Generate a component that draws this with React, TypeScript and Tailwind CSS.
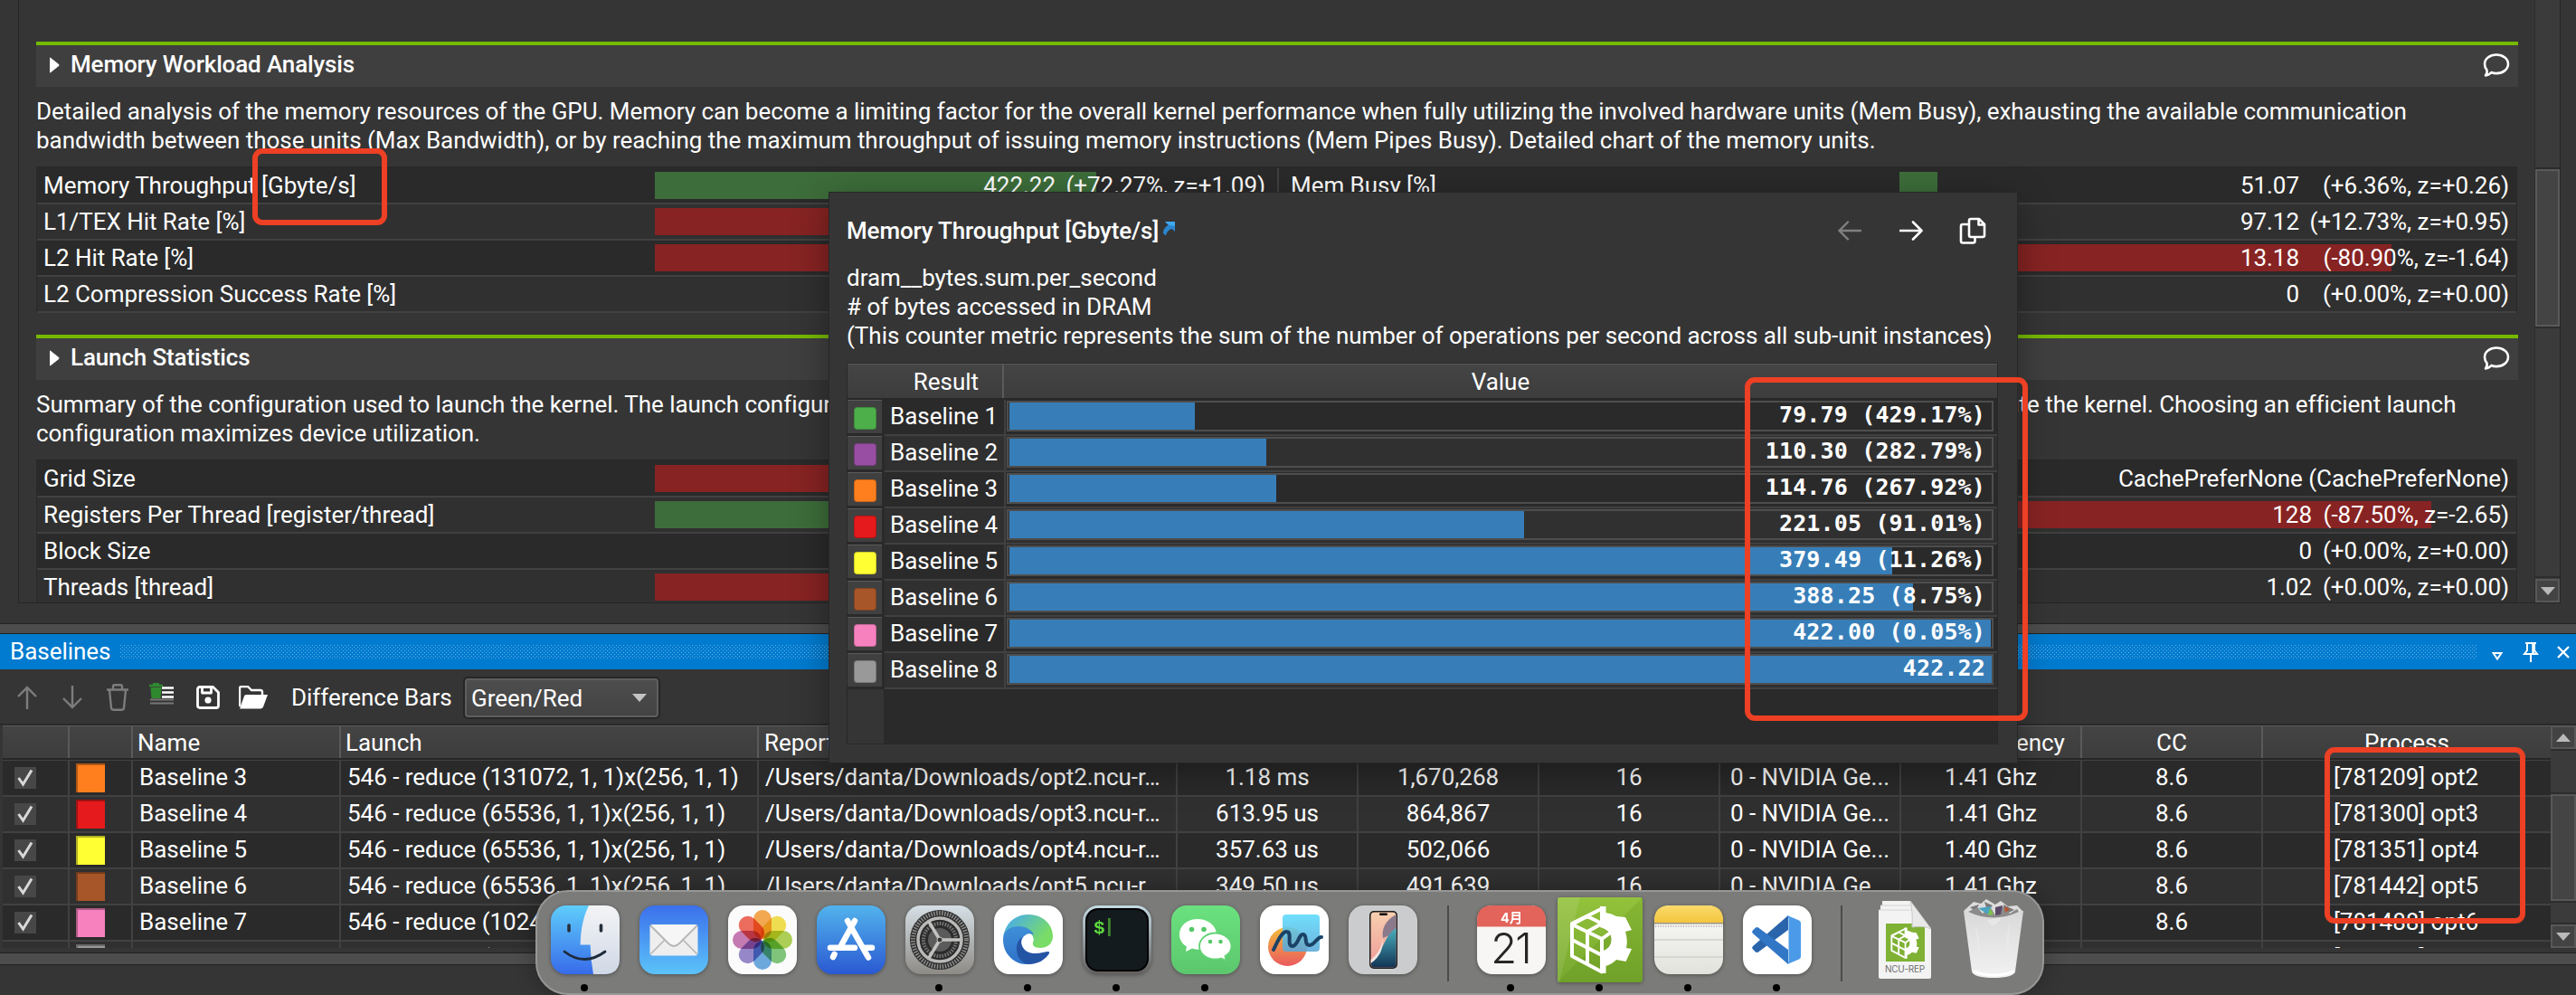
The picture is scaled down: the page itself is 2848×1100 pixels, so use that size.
import React from "react";

type Cell = {
  label: string;
  bar?: number;
  tone?: "g" | "r";
  value?: string;
  pct?: string;
  valueW?: string;
};

const Bubble = () => (
  <svg width="30" height="28" viewBox="0 0 30 28" fill="none" stroke="#fff" strokeWidth="2.6" strokeLinejoin="round">
    <path d="M3 25.500C4.500 23.500 5 21.500 4.400 19.300C2.800 17.400 2 15.200 2 12.800C2 7 7.700 2.500 15 2.500S28 7 28 12.800S22.300 23.100 15 23.100C13 23.100 11 22.700 9.400 22C7.600 24.200 5.500 25.300 3 25.500Z" />
  </svg>
);

const SectionHeader = ({ title }: { title: string }) => (
  <div className="flex h-[50px] items-center border-t-4 border-[#76b900] bg-[#3f3f3f] pb-1 pl-[14px] pr-[9px]">
    <svg width="12" height="18" viewBox="0 0 12 18" className="mt-[2px]">
      <path d="M1 1.500Q1 0 2.200 1L11 8Q12 9 11 10L2.200 17Q1 18 1 16.500Z" fill="#fff" />
    </svg>
    <span className="ml-[12px] text-[26px] font-medium tracking-[-0.14px]">{title}</span>
    <span className="ml-auto mt-[2px]">
      <Bubble />
    </span>
  </div>
);

const MetricCell = ({ c, side }: { c: Cell; side: "l" | "r" }) => (
  <div
    className={
      side === "l"
        ? "relative flex h-full w-[1373px] items-center border-r-2 border-[#414141] pl-[7px] pr-[13px]"
        : "relative flex h-full flex-1 items-center pl-[13px] pr-[10px]"
    }
  >
    <span className={side === "l" ? "w-[676px] shrink-0" : "w-[673px] shrink-0"}>{c.label}</span>
    <div className="flex h-[30px] flex-1 items-center">
      {c.bar ? (
        <div className={c.tone === "g" ? "h-[30px] bg-[#3d6d3a]" : "h-[30px] bg-[#872323]"} style={{ width: c.bar }} />
      ) : null}
    </div>
    <div className={side === "l" ? "absolute right-[13px] flex" : "absolute right-[8px] flex"}>
      <span>{c.value}</span>
      {c.pct ? <span className={c.valueW === "wide" ? "w-[232px] text-right" : "w-[218px] text-right"}>{c.pct}</span> : null}
    </div>
  </div>
);

const MetricTable = ({ rows }: { rows: [Cell, Cell][] }) => (
  <div className="mt-[13px] w-[2743px] border-x border-t-2 border-[#292929]">
    {rows.map(([a, b], i) => (
      <div
        key={i}
        className={
          i % 2 === 0
            ? "flex h-10 border-b-2 border-[#414141] bg-[#2a2a2a]"
            : "flex h-10 border-b-2 border-[#414141] bg-[#303030]"
        }
      >
        <MetricCell c={a} side="l" />
        <MetricCell c={b} side="r" />
      </div>
    ))}
  </div>
);

const memoryRows: [Cell, Cell][] = [
  [
    { label: "Memory Throughput [Gbyte/s]", bar: 488, tone: "g", value: "422.22", pct: "(+72.27%, z=+1.09)", valueW: "wide" },
    { label: "Mem Busy [%]", bar: 42, tone: "g", value: "51.07", pct: "(+6.36%, z=+0.26)", valueW: "wide" },
  ],
  [
    { label: "L1/TEX Hit Rate [%]", bar: 400, tone: "r" },
    { label: "", value: "97.12", pct: "(+12.73%, z=+0.95)", valueW: "wide" },
  ],
  [
    { label: "L2 Hit Rate [%]", bar: 400, tone: "r" },
    { label: "", bar: 544, tone: "r", value: "13.18", pct: "(-80.90%, z=-1.64)", valueW: "wide" },
  ],
  [{ label: "L2 Compression Success Rate [%]" }, { label: "", value: "0", pct: "(+0.00%, z=+0.00)", valueW: "wide" }],
];

const launchRows: [Cell, Cell][] = [
  [{ label: "Grid Size", bar: 400, tone: "r" }, { label: "", value: "CachePreferNone (CachePreferNone)" }],
  [
    { label: "Registers Per Thread [register/thread]", bar: 400, tone: "g" },
    { label: "", bar: 588, tone: "r", value: "128", pct: "(-87.50%, z=-2.65)" },
  ],
  [{ label: "Block Size" }, { label: "", value: "0", pct: "(+0.00%, z=+0.00)" }],
  [{ label: "Threads [thread]", bar: 400, tone: "r" }, { label: "", value: "1.02", pct: "(+0.00%, z=+0.00)" }],
];

const ScrollButton = ({ up }: { up?: boolean }) => (
  <div className="flex h-[26px] w-full items-center justify-center border-2 border-[#585858] bg-[#434343]">
    <svg width="16" height="9" viewBox="0 0 16 9">
      <path d={up ? "M0 9L8 0L16 9Z" : "M0 0L8 9L16 0Z"} fill="#b9b9b9" />
    </svg>
  </div>
);

const baselines = [
  { n: 1, color: "#4daf4a", w: 205, t: "79.79 (429.17%)" },
  { n: 2, color: "#984ea3", w: 284, t: "110.30 (282.79%)" },
  { n: 3, color: "#ff7f1e", w: 295, t: "114.76 (267.92%)" },
  { n: 4, color: "#e41a1c", w: 569, t: "221.05 (91.01%)" },
  { n: 5, color: "#ffff33", w: 976, t: "379.49 (11.26%)" },
  { n: 6, color: "#a65628", w: 999, t: "388.25 (8.75%)" },
  { n: 7, color: "#f781bf", w: 1085, t: "422.00 (0.05%)" },
  { n: 8, color: "#999999", w: 1086, t: "422.22" },
];

const Popup = () => (
  <div className="absolute left-[916px] top-[212px] flex h-[632px] w-[1315px] flex-col border border-[#272727] bg-[#353535] pl-[19px] pr-[22px] shadow-[0_10px_36px_rgba(0,0,0,0.35)]">
    <div className="mt-[26px] flex h-8 items-center">
      <span className="font-medium tracking-[-0.14px]">Memory Throughput [Gbyte/s]</span>
      <svg width="14" height="16" viewBox="0 0 14 16" className="mb-[4px] ml-[4px]">
        <path d="M3 0H14V11L10.500 8C7 9 5 11.500 4 15.500L1 13C1 8.500 3 6 6.500 4Z" fill="#2b86d0" />
        <path d="M3 0H14V5L8 4Z" fill="#3fa9f0" />
      </svg>
      <div className="ml-auto flex items-center pr-[12px]">
        <svg width="26" height="22" viewBox="0 0 26 22" fill="none" stroke="#808080" strokeWidth="2.400" strokeLinecap="round" strokeLinejoin="round">
          <path d="M25 11H1.500M11 1.500L1.500 11L11 20.500" />
        </svg>
        <svg width="26" height="22" viewBox="0 0 26 22" fill="none" stroke="#fff" strokeWidth="2.600" strokeLinecap="round" strokeLinejoin="round" className="ml-[42px]">
          <path d="M1 11H24.500M15 1.500L24.500 11L15 20.500" />
        </svg>
        <svg width="30" height="30" viewBox="0 0 30 30" fill="none" stroke="#fff" strokeWidth="2.600" strokeLinejoin="round" className="ml-[40px]">
          <path d="M13 2H22L28 8V20Q28 22 26 22H13Q11 22 11 20V4Q11 2 13 2ZM21.500 2V8.500H28" />
          <path d="M11 8H4Q2 8 2 10V26.500Q2 28.500 4 28.500H15.500Q17.500 28.500 17.500 26.500V22" />
        </svg>
      </div>
    </div>
    <p className="mt-[20px] whitespace-nowrap leading-8">
      dram__bytes.sum.per_second
      <br /># of bytes accessed in DRAM
      <br />
      (This counter metric represents the sum of the number of operations per second across all sub-unit instances)
    </p>
    <div className="mt-[14px] flex h-[422px] w-[1273px] flex-col border border-[#282828] bg-[#2a2a2a]">
      <div className="flex h-[40px] border-b-2 border-t border-b-[#282828] border-t-[#5a5a5a] bg-gradient-to-b from-[#444444] to-[#3d3d3d]">
        <div className="flex w-[173px] items-center justify-end border-r-2 border-[#5a5a5a] pr-[26px]">Result</div>
        <div className="flex flex-1 items-center justify-center">Value</div>
      </div>
      {baselines.map((b) => (
        <div key={b.n} className="flex h-[40px]">
          <div className="mr-[3px] flex h-[37px] w-[38px] items-end justify-center border-t border-[#5a5a5a] bg-[#404040] pb-[4px]">
            <div className="h-[25px] w-[25px] rounded-[4px] border border-black/20" style={{ backgroundColor: b.color }} />
          </div>
          <div
            className={
              b.n % 2
                ? "flex w-[134px] items-center border-b-2 border-r-2 border-[#404040] bg-[#2a2a2a] pb-[3px] pl-[6px]"
                : "flex w-[134px] items-center border-b-2 border-r-2 border-[#404040] bg-[#303030] pb-[3px] pl-[6px]"
            }
          >
            Baseline {b.n}
          </div>
          <div
            className={
              b.n % 2
                ? "relative flex-1 border-b-2 border-[#404040] bg-[#2a2a2a] pl-px pr-1 pt-px"
                : "relative flex-1 border-b-2 border-[#404040] bg-[#303030] pl-px pr-1 pt-px"
            }
          >
            <div className="h-[34px] border-2 border-[#4e4e4e] pl-px">
              <div className="h-[30px] bg-[#377eb8]" style={{ width: b.w }} />
            </div>
            <span className="absolute right-[13px] top-0 font-['DejaVu_Sans_Mono','Liberation_Mono',monospace] text-[25px] font-bold leading-[34px] tracking-[0.15px]">
              {b.t}
            </span>
          </div>
        </div>
      ))}
      <div className="w-10 flex-1 bg-[#353535]" />
    </div>
  </div>
);

const tableRows = [
  ["3", "#ff7f1e", "(131072, 1, 1)x(256, 1, 1)", "opt2", "1.18 ms", "1,670,268", "1.41 Ghz", "[781209] opt2"],
  ["4", "#e41a1c", "(65536, 1, 1)x(256, 1, 1)", "opt3", "613.95 us", "864,867", "1.41 Ghz", "[781300] opt3"],
  ["5", "#ffff33", "(65536, 1, 1)x(256, 1, 1)", "opt4", "357.63 us", "502,066", "1.40 Ghz", "[781351] opt4"],
  ["6", "#a65628", "(65536, 1, 1)x(256, 1, 1)", "opt5", "349.50 us", "491,639", "1.41 Ghz", "[781442] opt5"],
  ["7", "#f781bf", "(1024, 1, 1)x(256, 1, 1)", "opt6", "", "", "", "[781488] opt6"],
  ["8", "#999999", "(1024, 1, 1)x(256, 1, 1)", "", "", "", "", "[781530] opt7"],
];

const grid = "grid grid-cols-[74px_70px_230px_462px_463px_200px_200px_200px_200px_200px_200px_318px]";
const headCell = "flex items-center border-r-2 border-[#5a5a5a] pt-px";
const boxCell = "flex items-center border-r-2 border-[#414141]";
const bodyCell = "flex items-center whitespace-nowrap border-r-2 border-[#414141] pb-[2px]";

const BaselineTable = () => (
  <div className="flex h-[248px] border-t-2 border-[#2a2a2a] pl-[3px]">
    <div className="w-[2817px] overflow-hidden bg-[#2a2a2a]">
      <div className={`${grid} h-[38px] border-b-2 border-t border-b-[#262626] border-t-[#5a5a5a] bg-gradient-to-b from-[#444444] to-[#3d3d3d]`}>
        <div className={headCell} />
        <div className={headCell} />
        <div className={`${headCell} pl-[5px]`}>Name</div>
        <div className={`${headCell} pl-[5px]`}>Launch</div>
        <div className={`${headCell} pl-[6px]`}>Report</div>
        <div className={`${headCell} justify-center`}>Duration</div>
        <div className={`${headCell} justify-center`}>Cycles</div>
        <div className={`${headCell} justify-center`}>Regs</div>
        <div className={`${headCell} justify-center`}>GPU</div>
        <div className={`${headCell} justify-center`}>SM Frequency</div>
        <div className={`${headCell} justify-center`}>CC</div>
        <div className="flex items-center justify-center pt-px">Process</div>
      </div>
      <div className="h-px bg-[#414141]" />
      {tableRows.map(([n, color, launch, rep, dur, cyc, freq, proc], i) => (
        <div
          key={n}
          className={i % 2 === 0 ? `${grid} h-10 border-b-2 border-[#414141] bg-[#2a2a2a]` : `${grid} h-10 border-b-2 border-[#414141] bg-[#303030]`}
        >
          <div className={`${boxCell} pl-[13px]`}>
            <div className="flex h-6 w-6 items-center justify-center bg-[#474747]">
              <svg width="18" height="20" viewBox="0 0 18 20" fill="none" stroke="#d8d8d8" strokeWidth="3">
                <path d="M1.500 10L6.500 17L16 1.500" />
              </svg>
            </div>
          </div>
          <div className={`${boxCell} pl-[7px]`}>
            <div className="h-8 w-8 border-l-2 border-t-2 border-black/30" style={{ backgroundColor: color }} />
          </div>
          <div className={`${bodyCell} pl-[7px]`}>Baseline {n}</div>
          <div className={`${bodyCell} pl-[7px]`}>546 - reduce {launch}</div>
          <div className={`${bodyCell} pl-[7px]`}>{rep ? `/Users/danta/Downloads/${rep}.ncu-r…` : ""}</div>
          <div className={`${bodyCell} justify-center`}>{dur}</div>
          <div className={`${bodyCell} justify-center`}>{cyc}</div>
          <div className={`${bodyCell} justify-center`}>16</div>
          <div className={`${bodyCell} justify-center`}>0 - NVIDIA Ge...</div>
          <div className={`${bodyCell} justify-center`}>{freq}</div>
          <div className={`${bodyCell} justify-center`}>8.6</div>
          <div className="flex items-center justify-center pb-[2px] pr-[2px]">{proc}</div>
        </div>
      ))}
    </div>
    <div className="flex w-[28px] flex-col bg-[#3b3b3b]">
      <ScrollButton up />
      <div className="h-[50px] border-y-2 border-[#2d2d2d]" />
      <div className="h-[118px] border-2 border-[#585858] bg-[#444444]" />
      <div className="h-[26px] border-y-2 border-[#2d2d2d]" />
      <ScrollButton />
    </div>
  </div>
);

const Toolbar = () => (
  <div className="flex h-[60px] shrink-0 items-center pl-[19px] pt-[2px]">
    <svg width="22" height="26" viewBox="0 0 22 26" fill="none" stroke="#7d7d7d" strokeWidth="2.400">
      <path d="M11 26V2M1 12L11 2L21 12" />
    </svg>
    <svg width="22" height="26" viewBox="0 0 22 26" fill="none" stroke="#7d7d7d" strokeWidth="2.400" className="ml-[28px]">
      <path d="M11 0V24M1 14L11 24L21 14" />
    </svg>
    <svg width="24" height="30" viewBox="0 0 24 30" fill="none" stroke="#7d7d7d" strokeWidth="2.400" strokeLinejoin="round" className="ml-[27px]">
      <path d="M0 6.500H24M7 6V3Q7 1.300 8.700 1.300H15.300Q17 1.300 17 3V6M3 7L5 26.500Q5.200 28.700 7.400 28.700H16.600Q18.800 28.700 19 26.500L21 7" />
    </svg>
    <svg width="28" height="24" viewBox="0 0 28 24" className="mb-[8px] ml-[23px]">
      <path d="M14 5.500H27M14 10.500H27M14 15.500H27" stroke="#fff" strokeWidth="2.600" />
      <path d="M1 18.500H27M1 22.500H27" stroke="#777" strokeWidth="2.200" />
      <path d="M0 3H15M4 1.200H11" stroke="#2f8a2f" strokeWidth="2.600" />
      <path d="M1.500 5H13.500L12.500 17H2.500Z" fill="#2f8a2f" />
    </svg>
    <svg width="26" height="26" viewBox="0 0 26 26" fill="none" stroke="#fff" strokeWidth="2.800" strokeLinejoin="round" className="ml-[24px]">
      <path d="M4 1.500H18.500L24.500 7.500V22Q24.500 24.500 22 24.500H4Q1.500 24.500 1.500 22V4Q1.500 1.500 4 1.500Z" />
      <path d="M6.500 2V8H16.500V2" />
      <circle cx="13" cy="16" r="3.600" fill="#fff" stroke="none" />
    </svg>
    <svg width="32" height="26" viewBox="0 0 32 26" className="ml-[21px]">
      <path d="M1 23V3Q1 1 3 1H10L14 5H24Q26 5 26 7V10" fill="none" stroke="#fff" strokeWidth="2.400" />
      <path d="M8 10H32L27 23.500Q26.300 25.500 24 25.500H1L6 11.500Q6.500 10 8 10Z" fill="#fff" />
    </svg>
    <span className="ml-[26px] w-[190px] whitespace-nowrap">Difference Bars</span>
    <div className="mt-px flex h-[47px] w-[218px] items-center justify-between rounded-[5px] border-2 border-[#262626]">
      <div className="flex h-full w-full items-center justify-between rounded-[4px] border-2 border-[#5e5e5e] bg-gradient-to-b from-[#4d4d4d] to-[#434343] pl-[5px] pr-[11px]">
        <span>Green/Red</span>
        <svg width="16" height="9" viewBox="0 0 16 9">
          <path d="M0 0L8 9L16 0Z" fill="#c4c4c4" />
        </svg>
      </div>
    </div>
  </div>
);

const NsightGlyph = () => (
  <g>
    <g fill="none" stroke="#fff" strokeWidth="4" strokeLinejoin="round">
      <path d="M50 12L16 29V65L50 83" />
      <path d="M16 30L49 46V82M33 38V73M16 47L49 64M16 30L33 21L49 29M33 38L49 29" />
      <path d="M49 46L60 38" />
    </g>
    <path d="M47 10H53.500V17Q60 18 65 21L75 22L82 36L75 38Q78 47 76 56L82 57L75.500 71L65 69Q60 74 53.500 76V84H48V60Q60 57 59.500 46Q59 36 47 33Z" fill="#fff" />
  </g>
);

const tiles: { key: string; dot?: boolean; art: React.ReactNode }[] = [
  {
    key: "finder",
    dot: true,
    art: (
      <>
        <rect width="76" height="76" rx="17" fill="url(#finder)" />
        <path d="M42 0H59Q76 0 76 17V59Q76 76 59 76H47Q44 60 43.600 43.500H32.500Q33 18 42 0Z" fill="url(#face)" />
        <path d="M20 22V28M55.500 22V28" stroke="#26303c" strokeWidth="3.600" strokeLinecap="round" />
        <path d="M15 51Q37 68 60 51" fill="none" stroke="#1d2a3a" strokeWidth="2.800" strokeLinecap="round" />
      </>
    ),
  },
  {
    key: "mail",
    art: (
      <>
        <rect width="76" height="76" rx="17" fill="url(#mail)" />
        <rect x="11.500" y="21" width="53" height="34.500" rx="3" fill="#eeeeee" />
        <path d="M12 54L28 38M64 54L48 38" stroke="#b5b5b5" strokeWidth="1.600" />
        <path d="M12 22L32 42Q38 48 44 42L64 22" fill="#f6f6f6" stroke="#b5b5b5" strokeWidth="1.800" />
      </>
    ),
  },
  {
    key: "photos",
    art: (
      <>
        <rect width="76" height="76" rx="17" fill="#fbfbfb" />
        {["#f5a03a", "#f2dd3a", "#a4cc3f", "#6fbf6a", "#5b9fdc", "#8a79c4", "#c06bab", "#ee5a48"].map((c, i) => (
          <rect key={c} x="28" y="5" width="20" height="32" rx="10" fill={c} opacity="0.88" transform={`rotate(${i * 45} 38 38)`} className="mix-blend-multiply" />
        ))}
      </>
    ),
  },
  {
    key: "appstore",
    art: (
      <>
        <rect width="76" height="76" rx="17" fill="url(#store)" />
        <g stroke="#fff" strokeWidth="6.500" strokeLinecap="round">
          <path d="M42 17L26 46M19.500 54L18 57M34 17L57 57.500M15 46.800H42M54 46.800H61" />
        </g>
      </>
    ),
  },
  {
    key: "settings",
    dot: true,
    art: (
      <>
        <rect width="76" height="76" rx="17" fill="url(#sys)" />
        <circle cx="38" cy="38" r="33" fill="#2c2c2c" />
        <circle cx="38" cy="38" r="29.500" fill="none" stroke="#8d8d8d" strokeWidth="5" strokeDasharray="1.500 1.500" />
        <circle cx="38" cy="38" r="24" fill="none" stroke="#b9b9b7" strokeWidth="3.500" />
        <circle cx="38" cy="38" r="18" fill="none" stroke="#777" strokeWidth="4" strokeDasharray="1.600 1.400" />
        <circle cx="38" cy="38" r="13" fill="#5b5b5b" />
        <path d="M38 38H61M38 38L26 18M38 38L26 58" stroke="#c2c2c0" strokeWidth="3.500" />
        <circle cx="38" cy="38" r="3" fill="#3a3a3a" stroke="#c2c2c0" />
      </>
    ),
  },
  {
    key: "edge",
    dot: true,
    art: (
      <>
        <rect width="76" height="76" rx="17" fill="#ffffff" />
        <path d="M10 36C12 20 23 10 38 10C54 10 65 21 65 34C65 43 58 47 51 47C45 47 42 44 43 41C45 37 43 31 36 29C25 26 13 28 10 36Z" fill="url(#edgeA)" />
        <path d="M10 38C10 28 18 23 27 23C36 23 43 28 44 33C40 30 34 31 31 37C27 46 34 60 48 61C40 66 31 66 24 62C15 57 10 48 10 38Z" fill="url(#edgeB)" />
        <path d="M31 35C28 43 33 53 45 53C52 53 57 51 60 51C61 51 61.500 52 61 53C57 60 48 65 39 65C28 64 24 53 25 45C26 40 28 37 31 35Z" fill="#2454a4" />
      </>
    ),
  },
  {
    key: "terminal",
    dot: true,
    art: (
      <>
        <rect width="76" height="76" rx="17" fill="url(#term)" />
        <rect x="3" y="3" width="70" height="70" rx="14" fill="#000" />
        <rect x="5" y="5" width="66" height="66" rx="12" fill="#141b1f" />
        <text x="12" y="31" fill="#5fdc3e" fontSize="21" fontWeight="bold" fontFamily="Liberation Mono, monospace">$</text>
        <rect x="28" y="14" width="2.800" height="20" fill="#3f8a2e" />
      </>
    ),
  },
  {
    key: "wechat",
    dot: true,
    art: (
      <>
        <rect width="76" height="76" rx="17" fill="url(#wx)" />
        <path d="M29 15C18 15 9 22 9 32C9 38 12 42.500 17 45.500L16 51L23 47.500Q27 49 31 48.500C42 48 50 41 50 32C50 22 40 15 29 15Z" fill="#fff" />
        <path d="M49 30.500C39 30.500 31 37 31 45C31 53.500 39 59.500 49 59.500Q52 59.500 55 58.500L60.500 61L59.500 56C64 53.500 66.500 49.500 66.500 45C66.500 37 58 30.500 49 30.500Z" fill="#fff" stroke="#62d374" strokeWidth="1.800" />
        <g fill="#55c768">
          <circle cx="22.500" cy="26.500" r="2.800" />
          <circle cx="36" cy="26.500" r="2.800" />
          <circle cx="43" cy="40" r="2.300" />
          <circle cx="54.500" cy="40" r="2.300" />
        </g>
      </>
    ),
  },
  {
    key: "freeform",
    art: (
      <>
        <rect width="76" height="76" rx="17" fill="#ffffff" />
        <circle cx="30.500" cy="45.500" r="21.500" fill="url(#ball)" />
        <rect x="25" y="10" width="41" height="41" rx="4" fill="url(#note)" opacity="0.88" />
        <path d="M15 49C20 38 25 28 30 29C36 30 29 45 36 45C42 45 43 31 48 32C53 33 48 44 55 44C60 44 63 35 68 35" fill="none" stroke="#1b4266" strokeWidth="4" strokeLinecap="round" />
      </>
    ),
  },
  {
    key: "iphone",
    art: (
      <>
        <rect width="76" height="76" rx="17" fill="#cbcccd" />
        <rect x="23" y="6" width="31" height="64" rx="5" fill="#1a1a1a" />
        <rect x="24.500" y="7.500" width="28" height="61" rx="4" fill="url(#sky)" />
        <path d="M52.500 10C41 16 36 26 38 36L52.500 30Z" fill="#8b7a8c" />
        <path d="M52.500 25C38 35 40 50 25 62V65Q25 68.500 29 68.500H48.500Q52.500 68.500 52.500 64.500Z" fill="url(#wave)" />
        <path d="M37.500 36C37 48 30 56 24.500 60V64C36 56 38.500 46 37.500 36Z" fill="#f1e6e4" />
        <rect x="34" y="8.500" width="9" height="2.600" rx="1.300" fill="#000" />
      </>
    ),
  },
];

const rightTiles: { key: string; art: React.ReactNode }[] = [
  {
    key: "calendar",
    art: (
      <>
        <rect width="76" height="76" rx="17" fill="#f7f6f4" />
        <path d="M0 23.500V17Q0 0 17 0H59Q76 0 76 17V23.500Z" fill="#e2645a" />
        <text x="38" y="18.500" textAnchor="middle" fill="#fff" fontSize="14.500" fontWeight="bold" fontFamily="Inter, 'Noto Sans CJK SC', sans-serif">4月</text>
        <text x="37" y="64" textAnchor="middle" fill="#262626" fontSize="47" fontWeight="300" letterSpacing="-2" fontFamily="Inter, sans-serif">21</text>
      </>
    ),
  },
  {
    key: "nsight",
    art: (
      <g transform="translate(-9 -9)">
        <rect width="94" height="94" rx="3" fill="url(#ncu)" />
        <path d="M0 0H25L2 94H0Z" fill="#fff" opacity="0.1" />
        <path d="M94 0V94H0Z" fill="#3b6d00" opacity="0.12" />
        <NsightGlyph />
      </g>
    ),
  },
  {
    key: "notes",
    art: (
      <>
        <rect width="76" height="76" rx="17" fill="url(#paper)" />
        <path d="M0 19V17Q0 0 17 0H59Q76 0 76 17V19Z" fill="url(#gold)" />
        <path d="M0 19.800H76" stroke="#9c9480" strokeWidth="1.400" />
        <path d="M1 23H75" stroke="#bdbdb8" strokeWidth="1.800" strokeDasharray="1.200 1.600" />
        <path d="M0 38H76M0 57H76" stroke="#cfcfcd" strokeWidth="1.600" />
      </>
    ),
  },
  {
    key: "vscode",
    art: (
      <>
        <rect width="76" height="76" rx="17" fill="#ffffff" />
        <path d="M50 11V27L17 51.500Q15 52.500 13.500 51L10.500 48Q9.500 46.500 11 45Z" fill="#2a65ab" />
        <path d="M50 65V49L17 24.500Q15 23.500 13.500 25L10.500 28Q9.500 29.500 11 31Z" fill="#3277c6" />
        <path d="M49 11L62 16.500Q64 17.500 64 19.500V56.500Q64 58.500 62 59.500L49 65L50.500 62V14Z" fill="#4b9ae8" />
      </>
    ),
  },
];

const Tile = ({ dot, children }: { dot?: boolean; children: React.ReactNode }) => (
  <div className="flex w-[76px] flex-col items-center">
    <svg width="76" height="76" viewBox="0 0 76 76" className="isolate overflow-visible drop-shadow-[0_1px_2px_rgba(0,0,0,0.35)]">
      {children}
    </svg>
    <div className={dot ? "mr-[2px] mt-[11px] h-2 w-2 rounded-full bg-black" : "h-2 w-2"} />
  </div>
);

const grads: [string, string, string][] = [
  ["finder", "#5fcdfb", "#376be9"],
  ["face", "#f4f4f6", "#cfd8e6"],
  ["mail", "#3b70ec", "#5cc3f9"],
  ["store", "#52b3ec", "#2a59d2"],
  ["sys", "#d6e0e6", "#8e8b86"],
  ["term", "#c4dbe4", "#625f5e"],
  ["wx", "#6be17f", "#5cc76d"],
  ["ball", "#f3bd3c", "#ea5a5f"],
  ["note", "#5cdafc", "#5aa8d8"],
  ["sky", "#f7cfae", "#ee9a98"],
  ["wave", "#4ab0c0", "#123454"],
  ["ncu", "#93c23c", "#77a82e"],
  ["paper", "#fbfbf9", "#e2e2dd"],
  ["gold", "#f9da6b", "#f5c63f"],
  ["edgeB", "#3f8fd8", "#2e72c8"],
  ["bin", "#d9d9da", "#f2f2f2"],
];

const Dock = () => (
  <div className="absolute left-[592px] top-[984px] flex h-[116px] w-[1668px] items-start rounded-[36px] border-2 border-[#979796] bg-[#7b7b79] pl-[15px] pt-[15px] shadow-[0_0_24px_rgba(0,0,0,0.3)]">
    <svg width="0" height="0" className="absolute">
      <defs>
        {grads.map(([id, a, b]) => (
          <linearGradient key={id} id={id} x1="0" y1="0" x2="0" y2="1">
            <stop offset="0" stopColor={a} />
            <stop offset="1" stopColor={b} />
          </linearGradient>
        ))}
        <linearGradient id="edgeA" x1="0" y1="0" x2="1" y2="0.600">
          <stop offset="0.200" stopColor="#4fb2dc" />
          <stop offset="0.900" stopColor="#79dc66" />
        </linearGradient>
      </defs>
    </svg>
    <div className="flex gap-[22px]">
      {tiles.map((t) => (
        <Tile key={t.key} dot={t.dot}>
          {t.art}
        </Tile>
      ))}
    </div>
    <div className="ml-[33px] h-[84px] w-[2px] bg-[#4b4b4a]" />
    <div className="ml-[31px] flex gap-[22px]">
      {rightTiles.map((t) => (
        <Tile key={t.key} dot>
          {t.art}
        </Tile>
      ))}
    </div>
    <div className="ml-[32px] h-[84px] w-[2px] bg-[#4b4b4a]" />
    <svg width="58" height="86" viewBox="0 0 58 86" className="-mt-[5px] ml-[40px]">
      <path d="M4 0H35L58 31V84Q58 86 56 86H2Q0 86 0 84V10H2V5H4Z" fill="#f3f3f3" />
      <path d="M2 5H38M0 10H40" stroke="#d4d4d4" />
      <rect x="8" y="25" width="43" height="42" fill="#7fb135" />
      <path d="M35 0L58 31Q50 27 37 29Q38 12 35 0Z" fill="#e9e9e9" stroke="#c9c9c9" />
      <g transform="translate(7 25) scale(0.460)">
        <NsightGlyph />
      </g>
      <text x="29" y="79" textAnchor="middle" fontSize="10" fill="#6d6d6d" fontFamily="Inter, sans-serif" textLength="44">NCU-REP</text>
    </svg>
    <svg width="68" height="88" viewBox="0 0 68 88" className="-mt-[7px] ml-[35px]">
      <path d="M1 13L12 3L20 5L26 0L36 6L42 2L50 8L60 7L67 14L58 20H10Z" fill="#dcdcdc" />
      <path d="M8 9L18 6L14 14ZM24 3L33 7L27 13ZM45 6L57 12L46 17Z" fill="#7a7a7a" />
      <path d="M1 13Q34 27 67 13L58 80Q56 87 34 87T10 80Z" fill="url(#bin)" />
      <path d="M6 14L16 9L22 16L30 8L36 18L44 8L52 16L60 11L62 14Q34 27 6 14Z" fill="#8b8b8b" />
      <path d="M17 10L32 8L28 17Z" fill="#4aa3c0" />
      <path d="M36 9L44 7L42 17L36 18Z" fill="#5a4a66" />
      <path d="M46 8L52 11L47 15Z" fill="#b6552f" />
      <path d="M30 10L34 17L28 18Z" fill="#7fc24a" />
      <path d="M12 80Q34 88 57 80" fill="none" stroke="#fff" strokeWidth="3" />
      <path d="M28 24L42 21Q34 34 28 24ZM14 30Q20 45 18 66M52 28Q46 50 50 70" fill="#e9e9e9" stroke="#e9e9e9" fillOpacity="0.700" />
    </svg>
  </div>
);

export default function App() {
  return (
    <div className="relative flex h-[1100px] w-[2848px] flex-col overflow-hidden bg-[#353535] font-['Roboto','Noto_Sans_CJK_SC',sans-serif] text-[26px] leading-none tracking-[-0.036px] text-white">
      <div className="ml-[20px] flex h-[667px] w-[2811px] shrink-0 justify-between overflow-hidden border-x border-b border-[#262626] pl-[19px]">
        <div className="w-[2744px] pt-[46px]">
          <SectionHeader title="Memory Workload Analysis" />
          <p className="mt-[11px] whitespace-nowrap leading-8">
            Detailed analysis of the memory resources of the GPU. Memory can become a limiting factor for the overall kernel performance when fully utilizing the involved hardware units (Mem Busy), exhausting the available communication
            <br />
            bandwidth between those units (Max Bandwidth), or by reaching the maximum throughput of issuing memory instructions (Mem Pipes Busy). Detailed chart of the memory units.
          </p>
          <MetricTable rows={memoryRows} />
          <div className="h-6" />
          <SectionHeader title="Launch Statistics" />
          <p className="mt-[11px] whitespace-nowrap leading-8">
            Summary of the configuration used to launch the kernel. The launch configuration defines the size of the kernel grid, the division of the grid into blocks, and the GPU resources needed to execute the kernel. Choosing an efficient launch
            <br />
            configuration maximizes device utilization.
          </p>
          <MetricTable rows={launchRows} />
        </div>
        <div className="flex w-[28px] flex-col border-l border-[#2d2d2d] bg-[#3b3b3b]">
          <div className="h-[187px] border-b-2 border-[#2a2a2a]" />
          <div className="h-[174px] border-2 border-[#5a5a5a] bg-[#444444]" />
          <div className="mb-px flex-1 border-y-2 border-[#2d2d2d]" />
          <ScrollButton />
        </div>
      </div>
      <div className="mt-[22px] h-[12px] shrink-0 border-y border-[#222222] bg-[#4d4d4d]" />
      <div className="flex h-[39px] shrink-0 items-center bg-[#007bcf] pl-[11px] pr-[7px]">
        <span className="w-[122px] pb-px">Baselines</span>
        <div className="h-[15px] w-[2605px] bg-[radial-gradient(circle_at_0.5px_0.5px,#5fb0e6_0.7px,transparent_0.8px),radial-gradient(circle_at_2.5px_2.5px,#5fb0e6_0.7px,transparent_0.8px)] bg-[length:4px_4px]" />
        <div className="ml-auto flex items-center">
          <svg width="12" height="9" viewBox="0 0 12 9" className="mt-[10px]" fill="none" stroke="#fff" strokeWidth="2">
            <path d="M1.500 1H10.500L6 7.500Z" />
          </svg>
          <svg width="18" height="22" viewBox="0 0 18 22" className="ml-[22px]" fill="none" stroke="#fff" strokeWidth="2">
            <path d="M3 1H15M5 1V9L2 13H16L13 9V1M9 13V22" />
            <path d="M11.500 2V12" strokeWidth="2.500" />
          </svg>
          <svg width="14" height="14" viewBox="0 0 14 14" className="ml-[20px]" fill="none" stroke="#fff" strokeWidth="2.300">
            <path d="M1 1L13 13M13 1L1 13" />
          </svg>
        </div>
      </div>
      <Toolbar />
      <BaselineTable />
      <div className="mt-[5px] h-[14px] shrink-0 border-y border-[#222222] bg-[#4d4d4d]" />

      <Popup />
      <div className="absolute left-[279px] top-[164px] h-[85px] w-[149px] rounded-[11px] border-[6px] border-[#ed4024]" />
      <div className="absolute left-[1929px] top-[417px] h-[380px] w-[313px] rounded-[11px] border-[6px] border-[#ed4024]" />
      <div className="absolute left-[2570px] top-[826px] h-[195px] w-[222px] rounded-[11px] border-[6px] border-[#ed4024]" />
      <Dock />
    </div>
  );
}
